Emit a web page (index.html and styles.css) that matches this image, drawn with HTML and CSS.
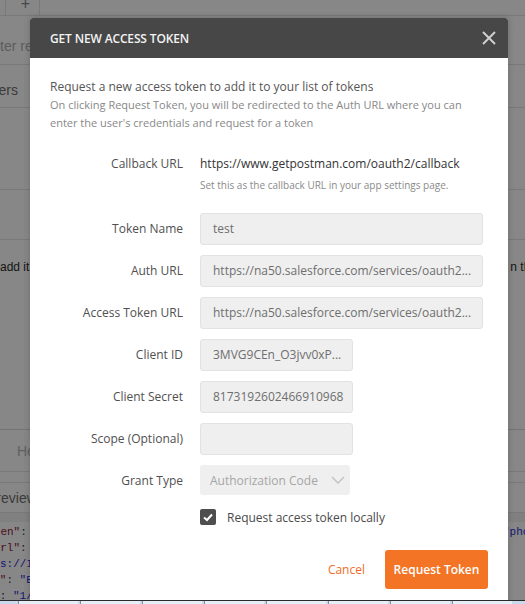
FILE: index.html
```html
<html>

<head>
    <title>Get new access token</title>
    <link rel="stylesheet" href="styles.css">
</head>

<body>

    <div class="app">
        <div class="tabs">
            <div class="tab-add">+</div>
        </div>
        <div class="row url-row"><span class="cut">Enter re</span></div>
        <div class="row sub-tabs"><span class="cut-sm">Headers</span></div>
        <div class="row blank-a"></div>
        <div class="row blank-b"></div>
        <div class="row auth-hint">
            <span>add it to</span>
            <span class="cut-right">n the</span>
        </div>
        <div class="row resp-tabs"><span class="he">Headers</span></div>
        <div class="row thin"></div>
        <div class="row preview"><span class="cut-pv">Preview</span></div>
        <div class="row band"></div>
        <div class="code">
            <div class="line"><span class="key">"token"</span>: <span class="str far">"phone"</span></div>
            <div class="line"><span class="key">"url"</span>:</div>
            <div class="line"><span class="str">"https://I</span></div>
            <div class="line"><span class="key">"id"</span>: <span class="str">"E</span></div>
            <div class="line"><span class="key">"v"</span>: <span class="str">"1/</span></div>
        </div>
    </div>

    <div class="overlay"></div>

    <div class="modal">
        <div class="modal-head">
            <span>Get new access token</span>
            <svg class="close" width="14" height="14" viewBox="0 0 14 14">
                <path d="M1 1 L13 13 M13 1 L1 13" stroke="#cfcfcf" stroke-width="2" fill="none"/>
            </svg>
        </div>
        <div class="modal-body">
            <p class="lead">Request a new access token to add it to your list of tokens</p>
            <p class="note">On clicking Request Token, you will be redirected to the Auth URL where you can enter the user's credentials and request for a token</p>

            <div class="form">
                <label class="callback-label">Callback URL</label>
                <div class="callback">
                    <div class="callback-url">https://www.getpostman.com/oauth2/callback</div>
                    <div class="callback-hint">Set this as the callback URL in your app settings page.</div>
                </div>

                <label>Token Name</label>
                <div class="field">test</div>

                <label>Auth URL</label>
                <div class="field">https://na50.salesforce.com/services/oauth2...</div>

                <label>Access Token URL</label>
                <div class="field">https://na50.salesforce.com/services/oauth2...</div>

                <label>Client ID</label>
                <div class="field short">3MVG9CEn_O3jvv0xP...</div>

                <label>Client Secret</label>
                <div class="field short">8173192602466910968</div>

                <label>Scope (Optional)</label>
                <div class="field short"></div>

                <label>Grant Type</label>
                <div class="select">
                    <span>Authorization Code</span>
                    <svg width="14" height="8" viewBox="0 0 14 8">
                        <path d="M1 1 L7 7 L13 1" stroke="#c4c4c4" stroke-width="1.5" fill="none"/>
                    </svg>
                </div>

                <div></div>
                <div class="check-row">
                    <span class="checkbox">
                        <svg width="16" height="16" viewBox="0 0 16 16">
                            <path d="M4 8.5 L7 11 L12 5.5" stroke="#ffffff" stroke-width="2" fill="none"/>
                        </svg>
                    </span>
                    Request access token locally
                </div>
            </div>

            <div class="actions">
                <span class="cancel">Cancel</span>
                <button class="primary">Request Token</button>
            </div>
        </div>
    </div>

    <div class="taskbar">
        <span></span><span></span><span></span><span></span><span></span><span></span><span></span><span></span>
    </div>

</body>

</html>
```

FILE: styles.css
```css
* {
    margin: 0;
    padding: 0;
    box-sizing: border-box;
}

body {
    width: 525px;
    height: 604px;
    overflow: hidden;
    position: relative;
    background: #ffffff;
    font: 13px "Liberation Sans", Arial, sans-serif;
    color: #3a3a3a;
}

/* page underneath the dialog */

.app {
    height: 604px;
    overflow: hidden;
    position: relative;
}

.tabs {
    height: 16px;
    border-bottom: 1px solid #e4e4e4;
    padding-left: 5px;
}

.tab-add {
    width: 35px;
    height: 15px;
    border-left: 1px solid #e4e4e4;
    border-right: 1px solid #e4e4e4;
    padding-left: 6px;
    line-height: 8px;
    font-size: 16px;
    color: #888888;
    text-align: center;
}

.row {
    border-bottom: 1px solid #e4e4e4;
    white-space: nowrap;
    overflow: hidden;
    display: flex;
    align-items: center;
}

.url-row {
    height: 49px;
    padding-top: 12px;
    color: #b0b0b0;
    font-size: 14px;
}

.cut {
    margin-left: -17px;
}

.sub-tabs {
    height: 43px;
    padding-top: 8px;
    font-size: 14px;
    color: #707070;
}

.cut-sm {
    margin-left: -35px;
}

.blank-a {
    height: 82px;
}

.blank-b {
    height: 50px;
}

.auth-hint {
    height: 190px;
    align-items: flex-start;
    justify-content: space-between;
    padding-top: 20px;
    color: #2a2a2a;
    font-size: 12px;
    border-bottom-color: #dadada;
}

.cut-right {
    margin-right: -12px;
}

.resp-tabs {
    height: 42px;
    font-size: 14px;
    color: #b8b8b8;
    padding-left: 17px;
}

.thin {
    height: 11px;
}

.preview {
    height: 30px;
    font-size: 14px;
    color: #707070;
}

.cut-pv {
    margin-left: -13px;
}

.band {
    height: 9px;
    background: #f2f2f2;
    border-bottom: none;
}

.code {
    background: #ffffff;
    padding-top: 2px;
    font: 11px "Liberation Mono", "Courier New", monospace;
    line-height: 16px;
    white-space: nowrap;
}

.code .line:nth-child(1) { margin-left: -26px; }
.code .line:nth-child(2) { margin-left: -13px; }
.code .line:nth-child(3) { margin-left: -33px; }
.code .line:nth-child(4) { margin-left: -20px; }
.code .line:nth-child(5) { margin-left: -20px; }

.key {
    color: #8b1a3a;
}

.str {
    color: #2a2ad0;
}

.far {
    position: absolute;
    left: 503px;
}

.overlay {
    position: absolute;
    top: 0;
    left: 0;
    right: 0;
    bottom: 0;
    background: rgba(0, 0, 0, 0.47);
}

/* dialog */

.modal {
    position: absolute;
    top: 18px;
    left: 30px;
    width: 478px;
    height: 600px;
    background: #ffffff;
    border-radius: 3px 3px 0 0;
    font-family: "Open Sans", "Noto Sans", sans-serif;
    box-shadow: 0 0 6px rgba(0, 0, 0, 0.2);
}

.modal-head {
    height: 40px;
    background: #474747;
    border-radius: 3px 3px 0 0;
    display: flex;
    align-items: center;
    justify-content: space-between;
    padding: 0 12px 0 20px;
    color: #f2f2f2;
    font-size: 12px;
    font-weight: 600;
    text-transform: uppercase;
    letter-spacing: -0.15px;
}

.modal-body {
    padding: 20px 25px 0 20px;
}

.lead {
    font-size: 12px;
    line-height: 18px;
    color: #555555;
}

.note {
    font-size: 11px;
    line-height: 18px;
    color: #888888;
}

.form {
    display: grid;
    grid-template-columns: 133px 1fr;
    column-gap: 17px;
    row-gap: 10px;
    margin-top: 22px;
    font-size: 12px;
}

.form label {
    text-align: right;
    color: #505050;
    line-height: 32px;
}

.form label.callback-label {
    line-height: 20px;
}

.callback {
    margin-bottom: 11px;
}

.callback-url {
    line-height: 20px;
    color: #333333;
}

.callback-hint {
    font-size: 10px;
    line-height: 14px;
    margin-top: 4px;
    color: #8a8a8a;
}

.field {
    height: 32px;
    line-height: 30px;
    padding-left: 12px;
    background: #efefef;
    border: 1px solid #e2e2e2;
    border-radius: 3px;
    color: #6e6e6e;
    white-space: nowrap;
    overflow: hidden;
}

.field.short {
    width: 153px;
}

.select {
    width: 150px;
    height: 30px;
    background: #efefef;
    border-radius: 3px;
    display: flex;
    align-items: center;
    justify-content: space-between;
    padding: 0 5px 0 10px;
    color: #a6a6a6;
}

.check-row {
    display: flex;
    align-items: center;
    gap: 11px;
    height: 16px;
    margin-top: 2px;
    color: #4a4a4a;
}

.checkbox {
    width: 16px;
    height: 16px;
    border-radius: 2px;
    background: #4e4e4e;
    display: flex;
}

.actions {
    display: flex;
    justify-content: flex-end;
    align-items: center;
    gap: 20px;
    margin-top: 25px;
    margin-right: -5px;
}

.cancel {
    color: #f26b26;
    font-size: 12px;
}

.primary {
    width: 103px;
    height: 39px;
    border: none;
    border-radius: 3px;
    background: #f37424;
    color: #ffffff;
    font: 600 12px "Open Sans", "Noto Sans", sans-serif;
}

/* system taskbar along the bottom edge */

.taskbar {
    position: absolute;
    left: 0;
    right: 0;
    bottom: 0;
    height: 4px;
    border-top: 1px solid #2b2b2b;
    background: #c9d9ee;
    display: flex;
    gap: 2px;
    padding-left: 18px;
}

.taskbar span {
    width: 60px;
    background: #e6eef8;
    border-left: 1px solid #7d8fa8;
}
```
